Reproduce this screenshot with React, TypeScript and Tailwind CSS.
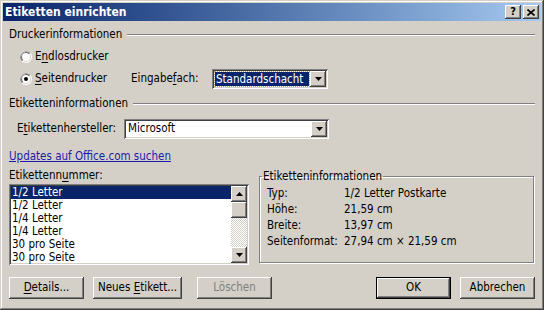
import React from "react";

const raised =
  "bg-[#d4d0c8] shadow-[inset_-1px_-1px_#404040,inset_1px_1px_#ffffff,inset_-2px_-2px_#808080,inset_2px_2px_#d4d0c8]";
const sunken =
  "shadow-[inset_1px_1px_#808080,inset_-1px_-1px_#ffffff,inset_2px_2px_#404040,inset_-2px_-2px_#d4d0c8]";

const Ul = ({ children }: { children: React.ReactNode }) => <span className="underline underline-offset-2">{children}</span>;

const Arrow = ({ up = false }: { up?: boolean }) => (
  <svg width="7" height="4" viewBox="0 0 7 4" className={up ? "rotate-180" : ""}>
    <path d="M0 0h7L3.5 4z" fill="#000" />
  </svg>
);

const Radio = ({ checked = false }: { checked?: boolean }) => (
  <svg width="12" height="12" viewBox="0 0 12 12" className="shrink-0">
    <circle cx="6" cy="6" r="6" fill="#fff" />
    <path d="M10.24 1.76A6 6 0 0 0 1.76 10.24" fill="#808080" />
    <circle cx="6" cy="6" r="5" fill="#d4d0c8" />
    <path d="M9.5 2.5A5 5 0 0 0 2.5 9.5" fill="#404040" />
    <circle cx="6" cy="6" r="4" fill="#fff" />
    {checked && <circle cx="6" cy="6" r="2" fill="#000" />}
  </svg>
);

const Header = ({ title }: { title: string }) => (
  <div className="flex items-center h-[14px]">
    <span>{title}</span>
    <div className="flex-1 ml-[5px] h-[2px] border-t border-t-[#808080] border-b border-b-white" />
  </div>
);

const Combo = ({ value, focused = false, width }: { value: string; focused?: boolean; width: string }) => (
  <div className={`relative h-[20px] bg-white flex items-center p-[2px] ${sunken} ${width}`}>
    <div className="flex-1 h-full flex items-center pl-[1px]">
      {focused ? (
        <span className="h-[14px] flex-1 mr-[1px] bg-[#0a246a] text-white px-[1px] leading-[14px] outline outline-1 outline-dotted outline-[#c0a060]">
          {value}
        </span>
      ) : (
        <span className="pl-[1px]">{value}</span>
      )}
    </div>
    <div className={`w-[16px] h-[16px] flex items-center justify-center ${raised}`}>
      <Arrow />
    </div>
  </div>
);

const Button = ({ children, w, def = false, disabled = false }: { children: React.ReactNode; w: string; def?: boolean; disabled?: boolean }) => (
  <div
    className={`h-[22px] ${w} flex items-center justify-center ${raised} ${def ? "outline outline-1 outline-black -outline-offset-1 shadow-[inset_-2px_-2px_#404040,inset_2px_2px_#ffffff,inset_-3px_-3px_#808080]" : ""} ${disabled ? "text-[#808080]" : ""}`}
  >
    {children}
  </div>
);

const items = ["1/2 Letter", "1/2 Letter", "1/4 Letter", "1/4 Letter", "30 pro Seite", "30 pro Seite"];

const info: [string, string][] = [
  ["Typ:", "1/2 Letter Postkarte"],
  ["Höhe:", "21,59 cm"],
  ["Breite:", "13,97 cm"],
  ["Seitenformat:", "27,94 cm × 21,59 cm"],
];

export default function App() {
  return (
    <div
      className="w-[544px] h-[310px] bg-[#d4d0c8] p-[3px] flex flex-col text-[11.5px] text-black shadow-[inset_-1px_-1px_#404040,inset_1px_1px_#d4d0c8,inset_-2px_-2px_#808080,inset_2px_2px_#ffffff]"
      style={{ fontFamily: '"DejaVu Sans Condensed", "DejaVu Sans", sans-serif' }}
    >
      {/* title bar */}
      <div className="h-[18px] flex items-center bg-gradient-to-r from-[#0a246a] to-[#a6caf0] pl-[2px] pr-[2px]">
        <span className="text-white font-bold flex-1 text-[12px]">Etiketten einrichten</span>
        <div className={`w-[16px] h-[14px] flex items-center justify-center font-bold text-[11px] ${raised}`}>?</div>
        <div className={`w-[16px] h-[14px] ml-[2px] flex items-center justify-center ${raised}`}>
          <svg width="8" height="7" viewBox="0 0 8 7">
            <path d="M0.5 0.5l7 6M7.5 0.5l-7 6" stroke="#000" strokeWidth="1.6" />
          </svg>
        </div>
      </div>

      <div className="flex-1 flex flex-col pl-[6px] pr-[6px]">
        <div className="mt-[7px]">
          <Header title="Druckerinformationen" />
        </div>

        <div className="mt-[8px] h-[14px] flex items-center pl-[11px]">
          <Radio />
          <span className="ml-[3px]">
            E<Ul>n</Ul>dlosdrucker
          </span>
        </div>

        <div className="mt-[5px] h-[20px] flex items-center pl-[11px]">
          <Radio checked />
          <span className="ml-[3px] w-[96px]">
            <Ul>S</Ul>eitendrucker
          </span>
          <span className="w-[81px]">
            Eingabe<Ul>f</Ul>ach:
          </span>
          <Combo value="Standardschacht" focused width="w-[116px]" />
        </div>

        <div className="mt-[8px]">
          <Header title="Etiketteninformationen" />
        </div>

        <div className="mt-[8px] h-[20px] flex items-center pl-[8px]">
          <span className="w-[107px]">
            E<Ul>t</Ul>ikettenhersteller:
          </span>
          <Combo value="Microsoft" width="w-[205px]" />
        </div>

        <div className="mt-[11px] h-[14px] flex items-center">
          <span className="text-[#1c1ca8] underline">Updates auf Office.com suchen</span>
        </div>

        <div className="mt-[5px] flex">
          <div className="w-[240px] flex flex-col">
            <div className="h-[14px] flex items-center">
              Etikettenn<Ul>u</Ul>mmer:
            </div>
            <div className={`mt-[1px] h-[81px] bg-white p-[2px] flex ${sunken}`}>
              <div className="flex-1 flex flex-col">
                {items.map((t, i) => (
                  <div key={i} className={`h-[13px] leading-[13px] pl-[1px] ${i === 0 ? "bg-[#0a246a] text-white" : ""}`}>
                    {t}
                  </div>
                ))}
              </div>
              <div className="w-[16px] flex flex-col">
                <div className={`h-[16px] flex items-center justify-center ${raised}`}>
                  <Arrow up />
                </div>
                <div className={`h-[16px] ${raised}`} />
                <div className="flex-1 bg-[repeating-conic-gradient(#d4d0c8_0_25%,#ffffff_0_50%)] bg-[length:2px_2px]" />
                <div className={`h-[16px] flex items-center justify-center ${raised}`}>
                  <Arrow />
                </div>
              </div>
            </div>
          </div>

          <fieldset className="ml-[10px] w-[275px] h-[94px] border border-[#808080] shadow-[inset_1px_1px_#ffffff,1px_1px_#ffffff] pl-[7px]">
            <legend className="px-[1px] -ml-[5px] leading-[14px]">Etiketteninformationen</legend>
            <div className="mt-[3px] flex flex-col">
              {info.map(([k, v]) => (
                <div key={k} className="h-[16px] flex items-center">
                  <span className="w-[77px]">{k}</span>
                  <span>{v}</span>
                </div>
              ))}
            </div>
          </fieldset>
        </div>

        <div className="mt-[12px] flex items-center">
          <Button w="w-[75px]">
            <span>
              <Ul>D</Ul>etails...
            </span>
          </Button>
          <div className="ml-[9px]">
            <Button w="w-[89px]">
              <span>
                Neues <Ul>E</Ul>tikett...
              </span>
            </Button>
          </div>
          <div className="ml-[15px]">
            <Button w="w-[75px]" disabled>
              Löschen
            </Button>
          </div>
          <div className="flex-1" />
          <Button w="w-[75px]" def>
            OK
          </Button>
          <div className="ml-[9px]">
            <Button w="w-[75px]">Abbrechen</Button>
          </div>
        </div>
      </div>
    </div>
  );
}
